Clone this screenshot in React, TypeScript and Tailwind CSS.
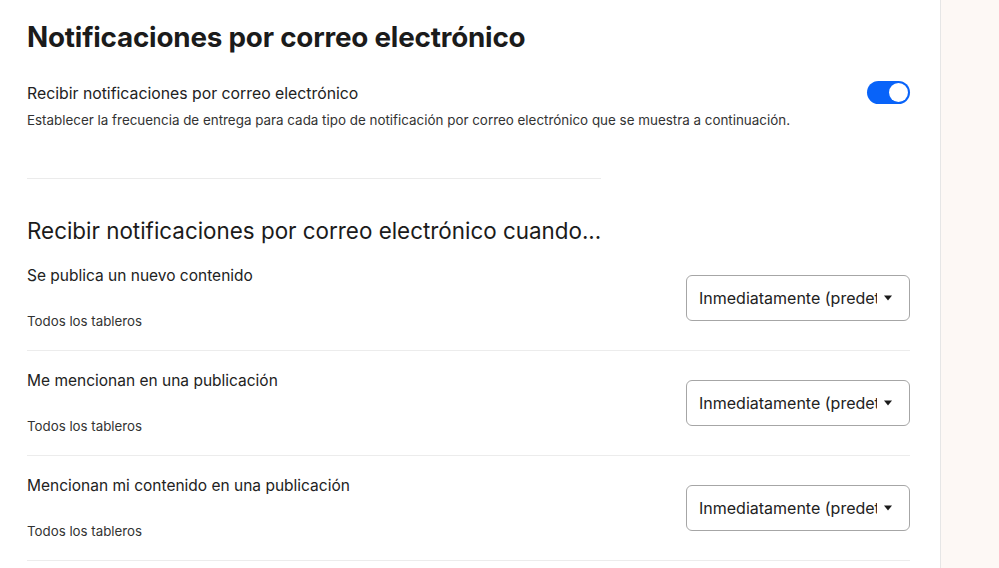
const rows = [
  'Se publica un nuevo contenido',
  'Me mencionan en una publicación',
  'Mencionan mi contenido en una publicación',
]

function Toggle() {
  return (
    <button className="relative h-[23px] w-[43px] shrink-0 rounded-full bg-[#0863f9]">
      <span className="absolute right-[2px] top-[2px] h-[19px] w-[19px] rounded-full bg-white" />
    </button>
  )
}

function FakeSelect() {
  return (
    <div className="flex h-[46px] w-[224px] shrink-0 items-center rounded-[6px] border border-[#a6a6a6] bg-white pl-[12px] pr-[16px]">
      <span className="flex-1 overflow-hidden whitespace-nowrap text-[16px] text-[#222]">
        Inmediatamente (predeterminado)
      </span>
      <svg width="10" height="6" viewBox="0 0 10 6" className="ml-[6px] shrink-0">
        <path d="M1 0.5h8L5 5.5z" fill="#1a1a1a" />
      </svg>
    </div>
  )
}

export default function App() {
  return (
    <div className="flex min-h-[568px] w-full bg-white text-[#222]" style={{ fontFamily: 'Inter, "Liberation Sans", sans-serif' }}>
      <main className="w-[940px] shrink-0 pl-[27px] pr-[30px] pt-[20px]">
        <h1 className="text-[27.8px] font-bold leading-[34px] tracking-[-0.2px] text-[#1b1b1b]">
          Notificaciones por correo electrónico
        </h1>

        <div className="mt-[28px] flex items-start justify-between">
          <div>
            <p className="text-[15.8px] leading-[24px]">Recibir notificaciones por correo electrónico</p>
            <p className="mt-[4px] text-[13.4px] leading-[20px] text-[#333]">
              Establecer la frecuencia de entrega para cada tipo de notificación por correo electrónico que se muestra a continuación.
            </p>
          </div>
          <div className="mt-[-1px]">
            <Toggle />
          </div>
        </div>

        <hr className="mt-[48px] w-[574px] border-t border-[#ebebeb]" />

        <h2 className="mt-[37px] text-[22.4px] font-normal leading-[30px] text-[#1b1b1b]">
          Recibir notificaciones por correo electrónico cuando...
        </h2>

        <ul>
          {rows.map((title) => (
            <li key={title} className="flex items-start justify-between border-b border-[#ececec] pb-[19px] pt-[18px]">
              <div className="flex flex-col gap-[23px]">
                <p className="text-[15.5px] leading-[24px]">{title}</p>
                <p className="text-[13.3px] leading-[20px] text-[#333]">Todos los tableros</p>
              </div>
              <div className="mt-[11px]">
                <FakeSelect />
              </div>
            </li>
          ))}
        </ul>
      </main>
      <aside className="flex-1 border-l border-[#e6e6e6] bg-[#fdf8f5]" />
    </div>
  )
}
